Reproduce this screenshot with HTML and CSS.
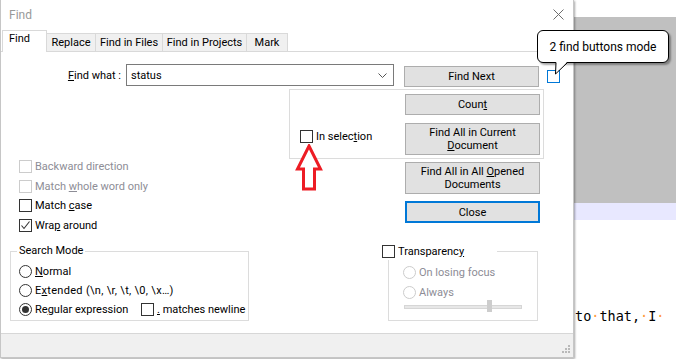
FILE: index.html
```html
<!DOCTYPE html>
<html lang="en">
<head>
    <meta charset="UTF-8">
    <title>Find</title>
    <link rel="stylesheet" href="styles.css">
</head>
<body>

    <div class="dialog">
        <div class="titlebar">
            <span class="title">Find</span>
            <svg class="close-x" width="11" height="11" viewBox="0 0 11 11">
                <path d="M0.5 0.5 L10.5 10.5 M10.5 0.5 L0.5 10.5" stroke="#6d6d6d" stroke-width="1" fill="none"/>
            </svg>
        </div>

        <!-- Tab strip -->
        <div class="tabs">
            <div class="tab active">Find</div>
            <div class="tab t-replace">Replace</div>
            <div class="tab t-files">Find in Files</div>
            <div class="tab t-projects">Find in Projects</div>
            <div class="tab t-mark">Mark</div>
        </div>

        <div class="panel">
            <div class="find-row">
                <label class="find-label"><u>F</u>ind what :</label>
                <div class="combo">
                    <span>status</span>
                    <svg width="9" height="5" viewBox="0 0 9 5"><path d="M0.5 0.5 L4.5 4.5 L8.5 0.5" stroke="#555" fill="none"/></svg>
                </div>
                <button class="btn btn-next">Find Next</button>
                <span class="box box-blue"></span>
            </div>

            <div class="middle">
                <div class="options">
                    <div class="opt disabled"><span class="box"></span><span>Backward direction</span></div>
                    <div class="opt disabled"><span class="box"></span><span>Match <u>w</u>hole word only</span></div>
                    <div class="opt"><span class="box"></span><span>Match <u>c</u>ase</span></div>
                    <div class="opt">
                        <span class="box">
                            <svg width="11" height="11" viewBox="0 0 11 11"><path d="M1.5 5.5 L4 8.5 L9.5 1.5" stroke="#333" stroke-width="1.1" fill="none"/></svg>
                        </span><span>Wra<u>p</u> around</span>
                    </div>
                </div>

                <div class="actions">
                    <div class="selbox">
                        <div class="opt insel"><span class="box"></span><span>In selec<u>t</u>ion</span></div>
                        <div class="selbtns">
                            <button class="btn">Coun<u>t</u></button>
                            <button class="btn btn-tall">Find All in Current<br><u>D</u>ocument</button>
                        </div>
                    </div>
                    <button class="btn btn-tall">Find All in All <u>O</u>pened<br>Documents</button>
                    <button class="btn btn-close">Close</button>
                </div>
            </div>

            <div class="bottom">
                <div class="group search-mode">
                    <span class="legend">Search Mode</span>
                    <div class="opt"><span class="radio"></span><span><u>N</u>ormal</span></div>
                    <div class="opt"><span class="radio"></span><span class="extended">E<u>x</u>tended (\n, \r, \t, \0, \x…)</span></div>
                    <div class="opt">
                        <span class="radio on"></span><span class="regex-label">Re<u>g</u>ular expression</span>
                        <span class="box"></span><span><u>.</u> matches newline</span>
                    </div>
                </div>

                <div class="group transparency">
                    <div class="legend opt"><span class="box"></span><span>Transparenc<u>y</u></span></div>
                    <div class="opt disabled"><span class="radio"></span><span>On losing focus</span></div>
                    <div class="opt disabled"><span class="radio"></span><span>Always</span></div>
                    <div class="slider"><span class="thumb"></span></div>
                </div>
            </div>
        </div>

        <div class="statusbar">
            <svg class="grip" width="9" height="9" viewBox="0 0 9 9">
                <rect x="6" y="0" width="2" height="2" fill="#b9b9b9"/>
                <rect x="3" y="3" width="2" height="2" fill="#b9b9b9"/>
                <rect x="6" y="3" width="2" height="2" fill="#b9b9b9"/>
                <rect x="0" y="6" width="2" height="2" fill="#b9b9b9"/>
                <rect x="3" y="6" width="2" height="2" fill="#b9b9b9"/>
                <rect x="6" y="6" width="2" height="2" fill="#b9b9b9"/>
            </svg>
        </div>
    </div>

    <!-- Editor behind the dialog -->
    <div class="editor">
        <div class="ed-top"></div>
        <div class="ed-gray"></div>
        <div class="ed-current"></div>
        <div class="ed-gap"></div>
        <div class="ed-line">to<i>·</i>that,<i>·</i>I<i>·</i></div>
    </div>

    <!-- Tooltip over the small checkbox -->
    <div class="tooltip">
        2 find buttons mode
        <svg class="tail" width="15" height="14" viewBox="0 0 15 14">
            <polygon points="2,0 13,0 1.5,12" fill="#fff"/>
            <polyline points="2,0.5 1.5,12 13,1" stroke="#000" stroke-width="1" fill="none"/>
        </svg>
    </div>

    <!-- Red arrow annotation -->
    <svg class="red-arrow" width="28" height="48" viewBox="0 0 28 48">
        <polygon points="14,2 25.5,25 19.5,25 19.5,45 8.5,45 8.5,25 2.5,25" fill="#fff" stroke="#ed1c24" stroke-width="3" stroke-linejoin="miter"/>
    </svg>

</body>
</html>
```

FILE: styles.css
```css
* {
    margin: 0;
    padding: 0;
    box-sizing: border-box;
}

html, body {
    width: 676px;
    height: 359px;
    overflow: hidden;
    background: #fff;
}

body {
    display: flex;
    position: relative;
    font-family: Roboto, "Noto Sans", sans-serif;
    font-size: 11px;
    color: #000;
}

u {
    text-decoration: underline;
    text-underline-offset: 1px;
}

/* ---------- dialog frame ---------- */

.dialog {
    width: 574px;
    height: 358px;
    flex: none;
    display: flex;
    flex-direction: column;
    background: #fff;
    border: 1px solid #c6c6c6;
    border-top: none;
    box-shadow: 1px 1px 2px rgba(0, 0, 0, 0.35);
    position: relative;
    z-index: 1;
}

.titlebar {
    height: 31px;
    flex: none;
    display: flex;
    align-items: center;
    justify-content: space-between;
    padding: 0 9px 1px 8px;
}

.title {
    color: #999;
    font-size: 12px;
}

.close-x {
    margin-top: -1px;
}

/* ---------- tabs ---------- */

.tabs {
    height: 21px;
    flex: none;
    display: flex;
    align-items: flex-end;
    padding-left: 1px;
    margin-right: 1px;
    border-bottom: 1px solid #d9d9d9;
}

.tab {
    height: 19px;
    margin-bottom: -1px;
    border: 1px solid #d9d9d9;
    border-left: none;
    background: #f0f0f0;
    text-align: center;
    line-height: 17px;
}

.tab.active {
    width: 45px;
    height: 22px;
    background: #fff;
    border-left: 1px solid #d9d9d9;
    border-bottom: none;
    text-align: left;
    padding-left: 6px;
    line-height: 16px;
}

.t-replace { width: 49px; }
.t-files { width: 67px; }
.t-projects { width: 84px; }
.t-mark { width: 41px; }

/* ---------- panel ---------- */

.panel {
    flex: 1;
    padding: 12px 0 0 9px;
}

.find-row {
    display: flex;
    align-items: center;
    height: 22px;
}

.find-label {
    width: 111px;
    text-align: right;
}

.combo {
    width: 268px;
    height: 22px;
    margin-left: 5px;
    border: 1px solid #7a7a7a;
    display: flex;
    align-items: center;
    justify-content: space-between;
    padding: 0 6px 0 4px;
}

.btn {
    width: 135px;
    height: 21px;
    background: #e1e1e1;
    border: 1px solid #adadad;
    font-family: inherit;
    font-size: 11px;
    color: #000;
    line-height: 13px;
    flex: none;
}

.btn-next {
    margin-left: 10px;
    margin-top: 2px;
}

.btn-tall {
    height: 32px;
}

.btn-close {
    height: 22px;
    border: 2px solid #0078d7;
    margin-top: 7px;
}

.box {
    width: 13px;
    height: 13px;
    flex: none;
    border: 1px solid #333;
    background: #fff;
    display: inline-flex;
    align-items: center;
    justify-content: center;
    margin-right: 3px;
}

.box-blue {
    border-color: #0078d7;
    margin-left: 8px;
    margin-top: 2px;
}

.radio {
    width: 13px;
    height: 13px;
    flex: none;
    border: 1px solid #333;
    border-radius: 50%;
    background: #fff;
    margin-right: 3px;
    display: inline-flex;
    align-items: center;
    justify-content: center;
}

.radio.on::after {
    content: "";
    width: 7px;
    height: 7px;
    border-radius: 50%;
    background: #333;
}

.opt {
    display: flex;
    align-items: center;
    height: 19.5px;
    white-space: nowrap;
}

.opt.disabled {
    color: #8d8d96;
}

.opt.disabled .box,
.opt.disabled .radio {
    border-color: #cccccc;
}

/* ---------- middle block ---------- */

.middle {
    display: flex;
    align-items: flex-start;
    margin-top: 3px;
}

.options {
    width: 279px;
    padding: 68px 0 0 9px;
}

.actions {
    width: 255px;
    display: flex;
    flex-direction: column;
    align-items: flex-end;
    padding-right: 4px;
}

.actions > .btn-tall {
    margin-top: 3px;
}

.selbox {
    width: 255px;
    height: 70px;
    margin-right: -4px;
    border: 1px solid #dcdcdc;
    display: flex;
    justify-content: space-between;
    padding: 4px 3px 0 10px;
}

.insel {
    margin-top: 33px;
}

.selbtns {
    display: flex;
    flex-direction: column;
    gap: 8px;
}

/* ---------- bottom groups ---------- */

.bottom {
    display: flex;
    margin-top: 16px;
}

.group {
    border: 1px solid #dcdcdc;
    height: 70px;
    position: relative;
}

.legend {
    position: absolute;
    background: #fff;
}

.search-mode {
    width: 239px;
    padding: 10px 0 0 8px;
}

.search-mode .legend {
    top: -8px;
    left: 6px;
    padding: 0 2px;
}

.search-mode .opt {
    height: 19px;
}

.extended {
    letter-spacing: 0.3px;
}

.regex-label {
    width: 106px;
}

.transparency {
    width: 150px;
    margin-left: 139px;
    padding: 10px 0 0 14px;
}

.transparency .opt {
    height: 20px;
}

.transparency .legend {
    top: -10px;
    left: -7px;
    width: 115px;
    height: 18px;
    color: #000;
}

.slider {
    width: 118px;
    height: 4px;
    margin: 3px 0 0 1px;
    background: #e7e7e7;
    border: 1px solid #d6d6d6;
    position: relative;
}

.thumb {
    position: absolute;
    left: 82px;
    top: -6px;
    width: 5px;
    height: 12px;
    background: #cdcdcd;
}

/* ---------- status bar ---------- */

.statusbar {
    height: 24px;
    flex: none;
    background: #f0f0f0;
    border-top: 1px solid #d7d7d7;
    display: flex;
    justify-content: flex-end;
    align-items: flex-end;
    padding: 0 2px 3px 0;
}

/* ---------- editor behind ---------- */

.editor {
    flex: 1;
    display: flex;
    flex-direction: column;
}

.ed-top { height: 17px; }
.ed-gray { height: 186px; background: #c0c0c0; }
.ed-current { height: 17px; background: #e8e8ff; }
.ed-gap { height: 88px; }

.ed-line {
    font-family: "DejaVu Sans Mono", monospace;
    font-size: 13.5px;
    line-height: 17px;
    padding-left: 1px;
    white-space: nowrap;
}

.ed-line i {
    font-style: normal;
    color: #ff9a3c;
}

/* ---------- overlays ---------- */

.tooltip {
    position: absolute;
    left: 537px;
    top: 30px;
    width: 132px;
    height: 33px;
    z-index: 3;
    background: #fff;
    border: 1px solid #000;
    border-radius: 6px;
    box-shadow: 2px 2px 2px rgba(0, 0, 0, 0.35);
    display: flex;
    align-items: center;
    justify-content: center;
    font-size: 12px;
}

.tail {
    position: absolute;
    left: 16px;
    top: 31px;
}

.red-arrow {
    position: absolute;
    left: 295px;
    top: 144px;
    z-index: 2;
}
```
